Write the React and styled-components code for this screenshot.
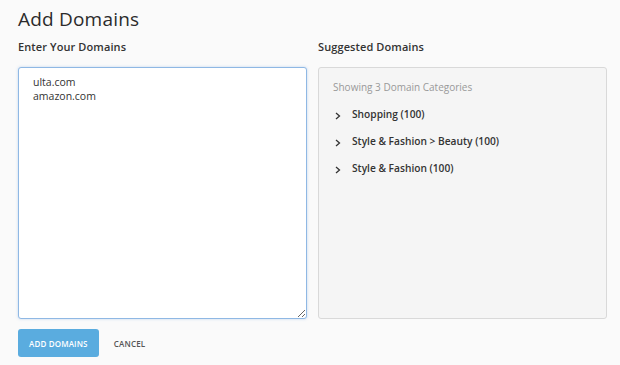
import styled, { createGlobalStyle } from "styled-components";

const GlobalStyle = createGlobalStyle`
  html, body {
    margin: 0;
    padding: 0;
    background: #fafafa;
  }
  body {
    font-family: "Open Sans", "DejaVu Sans", sans-serif;
    color: #333;
  }
`;

const Page = styled.div`
  width: 620px;
  height: 365px;
  box-sizing: border-box;
  padding: 6px 13px 0 18px;
`;

const Title = styled.h1`
  margin: 0;
  font-size: 19px;
  font-weight: 400;
  color: #2b2b2b;
  line-height: 26px;
  letter-spacing: 0.2px;
`;

const Columns = styled.div`
  display: grid;
  grid-template-columns: 289px 289px;
  column-gap: 11px;
  margin-top: 7px;
`;

const Column = styled.div`
  display: flex;
  flex-direction: column;
`;

const Label = styled.div`
  font-size: 11px;
  font-weight: 600;
  color: #333;
  line-height: 16px;
  margin-bottom: 12px;
  letter-spacing: 0.1px;
`;

const DomainInput = styled.textarea`
  box-sizing: border-box;
  height: 252px;
  resize: vertical;
  margin: 0;
  padding: 7px 14px;
  font-family: inherit;
  font-size: 10.5px;
  line-height: 14px;
  color: #333;
  background: #fff;
  border: 1px solid #8fb8e4;
  border-radius: 3px;
  box-shadow: 0 0 3px rgba(90, 150, 220, 0.35);
  outline: none;
`;

const Panel = styled.div`
  box-sizing: border-box;
  height: 252px;
  background: #f5f5f5;
  border: 1px solid #d9d9d9;
  border-radius: 3px;
  padding: 12px 14px;
`;

const PanelNote = styled.div`
  font-size: 10px;
  color: #999;
  line-height: 14px;
  margin-bottom: 6px;
`;

const Category = styled.div`
  display: flex;
  align-items: center;
  height: 27px;
  font-size: 10.2px;
  font-weight: 600;
  color: #333;
`;

const Chevron = styled.span`
  width: 19px;
  display: flex;
  align-items: center;
  padding-left: 2px;
  margin-top: 4px;
  box-sizing: border-box;
`;

const Actions = styled.div`
  display: flex;
  align-items: center;
  gap: 15px;
  margin-top: 10px;
`;

const PrimaryButton = styled.button`
  height: 28px;
  padding: 0 11px;
  border: none;
  border-radius: 3px;
  background: #5aacdf;
  color: #fff;
  font-family: inherit;
  font-size: 8px;
  font-weight: 600;
  letter-spacing: 0.15px;
  cursor: pointer;
`;

const TextButton = styled.button`
  border: none;
  background: none;
  padding: 0;
  color: #555;
  font-family: inherit;
  font-size: 8px;
  font-weight: 600;
  letter-spacing: 0.2px;
  cursor: pointer;
`;

const categories = [
  "Shopping (100)",
  "Style & Fashion > Beauty (100)",
  "Style & Fashion (100)",
];

function ChevronIcon() {
  return (
    <svg width="6" height="8" viewBox="0 0 6 8">
      <path d="M1 1 L4.5 4 L1 7" fill="none" stroke="#333" strokeWidth="1.3" />
    </svg>
  );
}

export default function App() {
  return (
    <Page>
      <GlobalStyle />
      <Title>Add Domains</Title>
      <Columns>
        <Column>
          <Label>Enter Your Domains</Label>
          <DomainInput defaultValue={"ulta.com\namazon.com"} />
        </Column>
        <Column>
          <Label>Suggested Domains</Label>
          <Panel>
            <PanelNote>Showing 3 Domain Categories</PanelNote>
            {categories.map((c) => (
              <Category key={c}>
                <Chevron>
                  <ChevronIcon />
                </Chevron>
                {c}
              </Category>
            ))}
          </Panel>
        </Column>
      </Columns>
      <Actions>
        <PrimaryButton>ADD DOMAINS</PrimaryButton>
        <TextButton>CANCEL</TextButton>
      </Actions>
    </Page>
  );
}
